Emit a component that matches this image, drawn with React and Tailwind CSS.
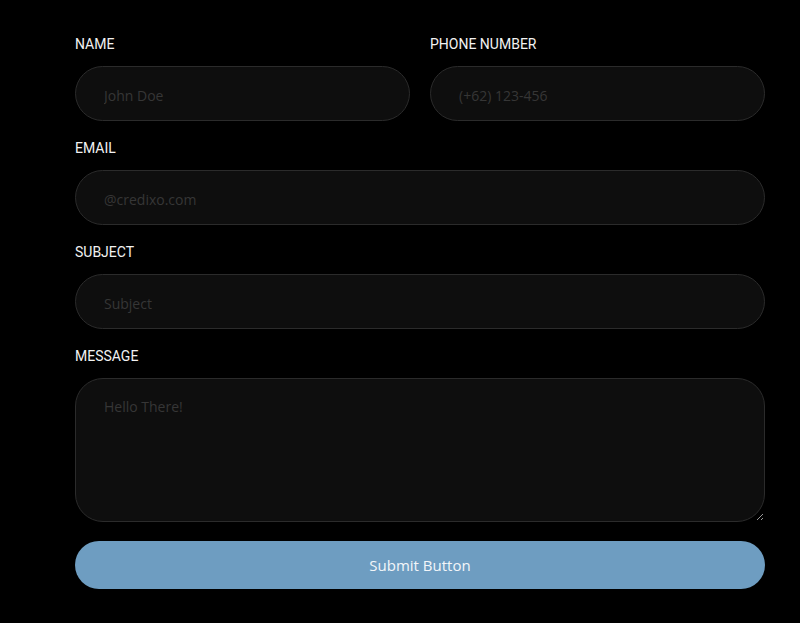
import React from 'react';

const labelCls = 'block h-5 mb-3 text-[14px] leading-5 font-normal uppercase text-[#f2f2f2] font-["Roboto",sans-serif]';
const inputCls =
  'block w-full h-[55px] rounded-full bg-[#0e0e0e] border border-[#2b2b2b] pl-7 pr-7 pt-1 text-[14px] text-[#cfcfcf] placeholder:text-[#363636] font-["Open_Sans",sans-serif] outline-none';

const Field = ({ label, placeholder, type = 'text' }) => (
  <div className="flex-1">
    <label className={labelCls}>{label}</label>
    <input type={type} placeholder={placeholder} className={inputCls} />
  </div>
);

export default function App() {
  return (
    <div className="min-h-screen w-full bg-black pt-[34px] pl-[75px] pr-[35px]">
      <form className="flex flex-col gap-[17px]" onSubmit={(e) => e.preventDefault()}>
        {/* Name + phone */}
        <div className="flex gap-5">
          <Field label="Name" placeholder="John Doe" />
          <Field label="Phone Number" placeholder="(+62) 123-456" />
        </div>

        <Field label="Email" placeholder="@credixo.com" type="email" />
        <Field label="Subject" placeholder="Subject" />

        <div>
          <label className={labelCls}>Message</label>
          <textarea
            placeholder="Hello There!"
            className='block w-full h-[144px] rounded-[28px] bg-[#0e0e0e] border border-[#2b2b2b] px-7 pt-[17px] text-[14px] text-[#cfcfcf] placeholder:text-[#363636] font-["Open_Sans",sans-serif] outline-none'
          />
        </div>

        <button
          type="submit"
          className='mt-[2px] h-12 w-full rounded-full bg-[#6e9dc1] text-[15px] text-[#f3f6f9] font-["Open_Sans",sans-serif]'
        >
          Submit Button
        </button>
      </form>
    </div>
  );
}
